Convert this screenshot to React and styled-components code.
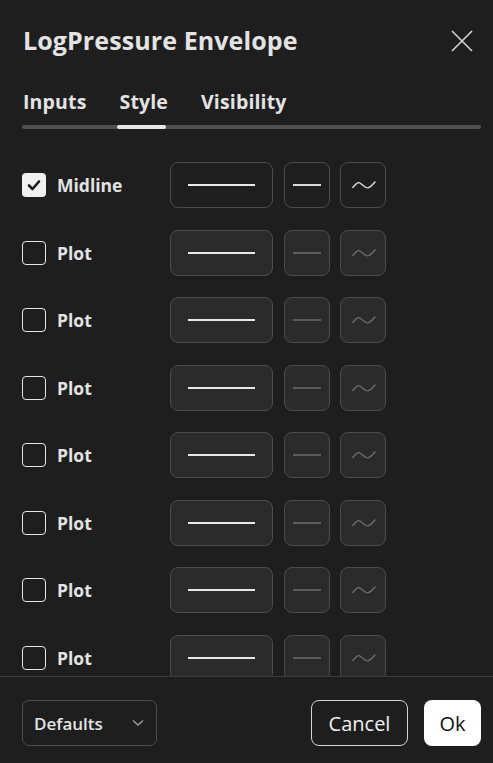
import React from 'react'
import styled, { createGlobalStyle } from 'styled-components'

const Global = createGlobalStyle`
	html, body {
		margin: 0;
		padding: 0;
		background: #1e1e1e;
	}
	body {
		font-family: 'Open Sans', 'Noto Sans', sans-serif;
	}
`

const rows = [
	{ label: 'Midline', on: true },
	{ label: 'Plot', on: false },
	{ label: 'Plot', on: false },
	{ label: 'Plot', on: false },
	{ label: 'Plot', on: false },
	{ label: 'Plot', on: false },
	{ label: 'Plot', on: false },
	{ label: 'Plot', on: false },
]

export default function App() {
	return (
		<>
			<Global />
			<Dialog>
				<Header>
					<Title>LogPressure Envelope</Title>
					<Close aria-label='close'>
						<svg width='22' height='22' viewBox='0 0 22 22'>
							<path d='M1 1 L21 21 M21 1 L1 21' stroke='#d6d6d6' strokeWidth='1.6' />
						</svg>
					</Close>
				</Header>
				<Tabs>
					<TabList>
						<Tab>Inputs</Tab>
						<Tab $active>Style</Tab>
						<Tab>Visibility</Tab>
					</TabList>
					<TabTrack>
						<TabThumb />
					</TabTrack>
				</Tabs>
				<Body>
					{rows.map((r, i) => (
						<Row key={i}>
							<LabelCell>
								<Check $on={r.on}>
									{r.on && (
										<svg width='16' height='16' viewBox='0 0 16 16'>
											<path d='M3 8.5 L6.5 12 L13 4.5' fill='none' stroke='#1e1e1e' strokeWidth='2.6' strokeLinecap='round' strokeLinejoin='round' />
										</svg>
									)}
								</Check>
								<Label>{r.label}</Label>
							</LabelCell>
							<ColorBox $on={r.on}>
								<ColorLine />
							</ColorBox>
							<SquareBox $on={r.on}>
								<WidthLine $on={r.on} />
							</SquareBox>
							<SquareBox $on={r.on}>
								<svg width='46' height='46' viewBox='0 0 46 46'>
									<path d='M12 26 C14 24 16 21 18 20.5 C21 20 24 26 28 26 C31 26 34 21 36 19.5' fill='none' stroke={r.on ? '#d8d8d8' : '#6a6a6a'} strokeWidth='1.5' />
								</svg>
							</SquareBox>
						</Row>
					))}
				</Body>
				<Footer>
					<Select>
						<span>Defaults</span>
						<svg width='12' height='8' viewBox='0 0 12 8'>
							<path d='M1 1.5 L6 6 L11 1.5' fill='none' stroke='#9a9a9a' strokeWidth='1.5' />
						</svg>
					</Select>
					<Spacer />
					<Button>Cancel</Button>
					<Button $primary>Ok</Button>
				</Footer>
			</Dialog>
		</>
	)
}

const Dialog = styled.div`
	width: 493px;
	height: 763px;
	background: #1e1e1e;
	color: #e3e3e3;
	display: flex;
	flex-direction: column;
	overflow: hidden;
`

const Header = styled.div`
	height: 80px;
	padding: 0 20px 0 23px;
	display: flex;
	align-items: center;
	justify-content: space-between;
	box-sizing: border-box;
`

const Title = styled.h1`
	margin: 0;
	font-size: 25px;
	font-weight: 700;
	color: #e3e3e3;
	letter-spacing: 0.1px;
`

const Close = styled.div`
	width: 22px;
	height: 22px;
	display: flex;
	margin-top: 2px;
`

const Tabs = styled.div`
	padding: 0 12px 0 22px;
`

const TabList = styled.div`
	display: flex;
	gap: 33px;
	height: 45px;
	align-items: center;
	padding-left: 1px;
	padding-bottom: 2px;
	box-sizing: border-box;
`

const Tab = styled.div`
	font-size: 19.5px;
	font-weight: 700;
	color: #e3e3e3;
	letter-spacing: 0.15px;
`

const TabTrack = styled.div`
	height: 4px;
	border-radius: 2px;
	background: #505050;
	position: relative;
`

const TabThumb = styled.div`
	position: absolute;
	left: 95px;
	top: 0;
	width: 49px;
	height: 4px;
	border-radius: 2px;
	background: #e8e8e8;
`

const Body = styled.div`
	flex: 1;
	overflow: hidden;
	padding: 33px 0 0 22px;
	display: flex;
	flex-direction: column;
	gap: 21.5px;
	border-bottom: 1px solid #3a3a3a;
`

const Row = styled.div`
	display: flex;
	align-items: center;
	gap: 10.5px;
	flex-shrink: 0;
`

const LabelCell = styled.div`
	width: 137.5px;
	display: flex;
	align-items: center;
	gap: 11px;
`

const Check = styled.div`
	width: 24px;
	height: 24px;
	box-sizing: border-box;
	border-radius: 4px;
	display: flex;
	align-items: center;
	justify-content: center;
	background: ${p => (p.$on ? '#f0f0f0' : 'transparent')};
	border: ${p => (p.$on ? 'none' : '1.5px solid #e6e6e6')};
`

const Label = styled.span`
	font-size: 17.5px;
	font-weight: 700;
	color: #e3e3e3;
`

const Box = styled.div`
	height: 46px;
	box-sizing: border-box;
	border-radius: 8px;
	border: 1px solid #4c4c4c;
	background: ${p => (p.$on ? '#1e1e1e' : '#2b2b2b')};
	display: flex;
	align-items: center;
	justify-content: center;
`

const ColorBox = styled(Box)`
	width: 103px;
`

const SquareBox = styled(Box)`
	width: 46px;
`

const ColorLine = styled.div`
	width: 67px;
	height: 2px;
	background: #e8e8e8;
`

const WidthLine = styled.div`
	width: 28px;
	height: 2px;
	background: ${p => (p.$on ? '#d8d8d8' : '#5a5a5a')};
`

const Footer = styled.div`
	height: 86px;
	flex-shrink: 0;
	box-sizing: border-box;
	padding: 23px 12px 17px 22px;
	display: flex;
	align-items: flex-start;
	gap: 16px;
`

const Select = styled.div`
	width: 135px;
	height: 46px;
	box-sizing: border-box;
	border: 1px solid #4c4c4c;
	border-radius: 7px;
	display: flex;
	align-items: center;
	justify-content: space-between;
	padding: 0 12px 0 11px;
	font-size: 17px;
	font-weight: 600;
	color: #e3e3e3;
`

const Spacer = styled.div`
	flex: 1;
`

const Button = styled.div`
	height: 46px;
	box-sizing: border-box;
	border-radius: 8px;
	display: flex;
	align-items: center;
	justify-content: center;
	font-size: 20px;
	font-weight: 500;
	padding: 0 ${p => (p.$primary ? '14px' : '15px')};
	min-width: ${p => (p.$primary ? '57px' : '97px')};
	background: ${p => (p.$primary ? '#ffffff' : 'transparent')};
	color: ${p => (p.$primary ? '#111111' : '#f0f0f0')};
	border: ${p => (p.$primary ? 'none' : '1.5px solid #d4d4d4')};
`
